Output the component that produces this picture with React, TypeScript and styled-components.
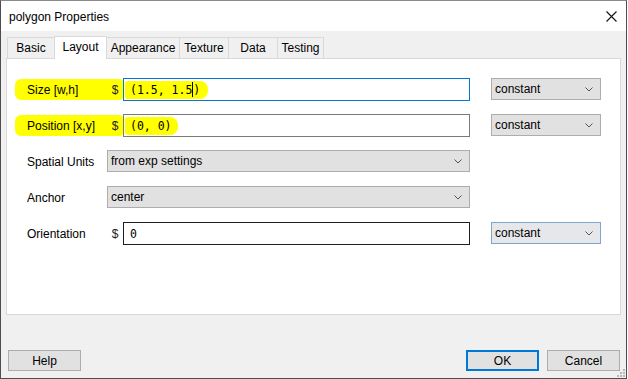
import React from "react";
import styled, { createGlobalStyle } from "styled-components";

const GlobalStyle = createGlobalStyle`
  html, body {
    margin: 0;
    padding: 0;
    background: #ffffff;
  }
  body {
    font-family: "Liberation Sans", Arial, sans-serif;
    font-size: 12px;
    color: #000;
  }
`;

const TABS = [
  { name: "Basic", width: 48 },
  { name: "Layout", width: 53 },
  { name: "Appearance", width: 74 },
  { name: "Texture", width: 50 },
  { name: "Data", width: 50 },
  { name: "Testing", width: 47 },
];

const Chevron = () => (
  <svg width="8" height="5" viewBox="0 0 8 5">
    <path d="M0.5 0.5 L4 4 L7.5 0.5" fill="none" stroke="#555" strokeWidth="1" />
  </svg>
);

export default function App() {
  return (
    <>
      <GlobalStyle />
      <Window>
        <TitleBar>
          <Title>polygon Properties</Title>
          <svg width="11" height="11" viewBox="0 0 11 11">
            <path d="M0.5 0.5 L10.5 10.5 M10.5 0.5 L0.5 10.5" stroke="#111" strokeWidth="1.1" />
          </svg>
        </TitleBar>

        <Client>
          <TabStrip>
            {TABS.map((t) => (
              <Tab key={t.name} $w={t.width} $active={t.name === "Layout"}>
                {t.name}
              </Tab>
            ))}
          </TabStrip>

          <Panel>
            <Form>
              <LabelGroup $marked>
                <Label>Size [w,h]</Label>
                <Dollar>$</Dollar>
              </LabelGroup>
              <TextBox $state="focus">
                <Marked $w={83}>
                  (1.5, 1.5<Caret />)
                </Marked>
              </TextBox>
              <Combo>
                <span>constant</span>
                <Chevron />
              </Combo>

              <LabelGroup $marked>
                <Label>Position [x,y]</Label>
                <Dollar>$</Dollar>
              </LabelGroup>
              <TextBox>
                <Marked $w={53}>(0, 0)</Marked>
              </TextBox>
              <Combo>
                <span>constant</span>
                <Chevron />
              </Combo>

              <LabelGroup $solo>
                <Label>Spatial Units</Label>
              </LabelGroup>
              <Combo $wide>
                <span>from exp settings</span>
                <Chevron />
              </Combo>

              <LabelGroup $solo>
                <Label>Anchor</Label>
              </LabelGroup>
              <Combo $wide>
                <span>center</span>
                <Chevron />
              </Combo>

              <LabelGroup>
                <Label>Orientation</Label>
                <Dollar>$</Dollar>
              </LabelGroup>
              <TextBox $state="hover">
                <span>0</span>
              </TextBox>
              <Combo $hot>
                <span>constant</span>
                <Chevron />
              </Combo>
            </Form>
          </Panel>

          <Footer>
            <Button>Help</Button>
            <FooterRight>
              <Button $default>OK</Button>
              <Button>Cancel</Button>
            </FooterRight>
          </Footer>

          <Grip width="8" height="8" viewBox="0 0 8 8">
            <rect x="6" y="0" width="2" height="2" fill="#b8b8b8" />
            <rect x="3" y="3" width="2" height="2" fill="#b8b8b8" />
            <rect x="6" y="3" width="2" height="2" fill="#b8b8b8" />
            <rect x="0" y="6" width="2" height="2" fill="#b8b8b8" />
            <rect x="3" y="6" width="2" height="2" fill="#b8b8b8" />
            <rect x="6" y="6" width="2" height="2" fill="#b8b8b8" />
          </Grip>
        </Client>
      </Window>
    </>
  );
}

/* --- Styled Components --- */
const Window = styled.div`
  width: 627px;
  height: 379px;
  box-sizing: border-box;
  border: 1px solid #4d4d4d;
  border-top-color: #8a8a8a;
  display: flex;
  flex-direction: column;
  overflow: hidden;
`;

const TitleBar = styled.div`
  height: 30px;
  flex: none;
  background: #ffffff;
  display: flex;
  align-items: center;
  justify-content: space-between;
  padding: 0 9px 0 8px;
`;

const Title = styled.div`
  font-size: 12px;
  margin-top: 1px;
`;

const Client = styled.div`
  position: relative;
  flex: 1;
  background: #f0f0f0;
  padding: 5px 5px 0 5px;
  display: flex;
  flex-direction: column;
`;

const TabStrip = styled.div`
  height: 22px;
  display: flex;
  align-items: flex-end;
  padding-left: 1px;
`;

const Tab = styled.div<{ $w: number; $active?: boolean }>`
  box-sizing: border-box;
  width: ${(p) => p.$w}px;
  height: ${(p) => (p.$active ? 23 : 21)}px;
  margin-left: -1px;
  margin-bottom: ${(p) => (p.$active ? -1 : 0)}px;
  &:first-child {
    margin-left: 0;
  }
  position: relative;
  z-index: ${(p) => (p.$active ? 2 : 1)};
  border: 1px solid #d9d9d9;
  border-bottom: none;
  background: ${(p) => (p.$active ? "#ffffff" : "#f0f0f0")};
  display: flex;
  align-items: center;
  justify-content: center;
  padding-bottom: ${(p) => (p.$active ? 2 : 0)}px;
  font-size: 12px;
  white-space: nowrap;
`;

const Panel = styled.div`
  box-sizing: border-box;
  width: 615px;
  height: 257px;
  flex: none;
  background: #ffffff;
  border: 1px solid #d9d9d9;
  padding: 19px 0 0 20px;
`;

const Form = styled.div`
  display: grid;
  grid-template-columns: 80px 16px 347px 21px 110px;
  grid-auto-rows: 23px;
  row-gap: 13px;
`;

const LabelGroup = styled.div<{ $marked?: boolean; $solo?: boolean }>`
  grid-column: ${(p) => (p.$solo ? "1" : "1 / span 2")};
  display: flex;
  align-items: center;
  align-self: center;
  height: 21px;
  margin-left: ${(p) => (p.$marked ? -12 : 0)}px;
  padding-left: ${(p) => (p.$marked ? 12 : 0)}px;
  background: ${(p) => (p.$marked ? "#ffff00" : "transparent")};
  border-radius: ${(p) => (p.$marked ? "6px 3px 3px 6px" : "0")};
`;

const Label = styled.span`
  width: 80px;
  font-size: 12px;
  white-space: nowrap;
`;

const Dollar = styled.span`
  width: 16px;
  text-align: center;
  font-size: 12px;
  color: #222;
`;

const TextBox = styled.div<{ $state?: "focus" | "hover" }>`
  grid-column: 3;
  box-sizing: border-box;
  height: 23px;
  border: 1px solid
    ${(p) =>
      p.$state === "focus" ? "#0078d7" : p.$state === "hover" ? "#1e1e1e" : "#7a7a7a"};
  background: #ffffff;
  display: flex;
  align-items: center;
  padding-left: 6px;
  font-family: "DejaVu Sans Mono", "Liberation Mono", monospace;
  font-size: 11.5px;
  white-space: pre;
`;

const Marked = styled.span<{ $w: number }>`
  display: inline-flex;
  align-items: center;
  box-sizing: border-box;
  width: ${(p) => p.$w}px;
  height: 18px;
  margin-left: -5px;
  padding-left: 5px;
  background: #ffff00;
  border-radius: 3px 8px 8px 3px;
`;

const Caret = styled.span`
  display: inline-block;
  width: 1px;
  height: 15px;
  background: #000;
`;

const Combo = styled.div<{ $wide?: boolean; $hot?: boolean }>`
  grid-column: ${(p) => (p.$wide ? "2 / span 2" : "5")};
  box-sizing: border-box;
  height: 22px;
  align-self: start;
  border: 1px solid ${(p) => (p.$hot ? "#7fa6cc" : "#adadad")};
  background: ${(p) => (p.$hot ? "#e5e7ea" : "#e1e1e1")};
  display: flex;
  align-items: center;
  justify-content: space-between;
  padding: 0 7px 0 3px;
  font-size: 12px;
`;

const Footer = styled.div`
  margin-top: 35px;
  display: flex;
  justify-content: space-between;
  padding: 0 1px 0 2px;
`;

const FooterRight = styled.div`
  display: flex;
  gap: 8px;
`;

const Button = styled.div<{ $default?: boolean }>`
  box-sizing: border-box;
  width: 73px;
  height: 21px;
  background: #e1e1e1;
  border: ${(p) => (p.$default ? "2px solid #0078d7" : "1px solid #adadad")};
  display: flex;
  align-items: center;
  justify-content: center;
  font-size: 12px;
`;

const Grip = styled.svg`
  position: absolute;
  right: 1px;
  bottom: 1px;
`;
